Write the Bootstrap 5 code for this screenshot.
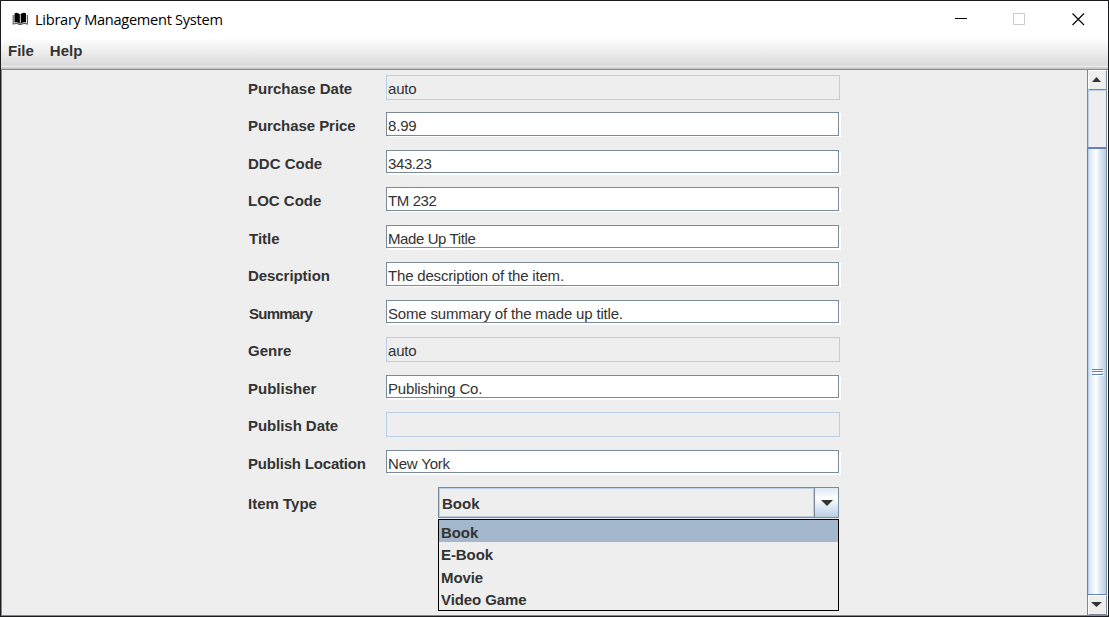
<!DOCTYPE html>
<html lang="en">
<head>
<meta charset="utf-8">
<title>Library Management System</title>
<link href="https://cdn.jsdelivr.net/npm/bootstrap@5.3.0/dist/css/bootstrap.min.css" rel="stylesheet">
<style>
body{height:617px;overflow:hidden;background:#eee;color:#333;font:15px/18px "Liberation Sans",Arial,sans-serif}
svg{display:block;flex:none}
.window{height:617px;border:1px solid #1b1b1f}
.titlebar{height:37px;padding:0 21px 1px 11px;background:#fff;color:#000}
.caption{font:14.6px/20px "Open Sans","Noto Sans",sans-serif;letter-spacing:-.28px;margin-left:6px}
.menus{height:31px;padding:4px 0 0 7px;gap:16px;background:linear-gradient(#fff,#dadada 28px,#eee 28px,#eee 29px,#ccc 29px);font-weight:700}
.pane{height:547px;border:solid #7a8a99;border-width:1px 0 1px 1px}
.pane-body{padding:5px 0 0 246px}
.form-line{height:37px}
.form-line:nth-child(even){height:38px}
.name{width:138px;font-weight:700;line-height:18px;padding-top:5px;white-space:nowrap}
.name.tight{letter-spacing:-.19px}
.name.snug{letter-spacing:-.06px}
.name.tighter{letter-spacing:-.75px;padding-left:1px}
.name.nudge{padding-left:1px}
.field{width:453px;height:24px;border:1px solid #7a8a99;background:#fff;padding:4px 0 0 1px;letter-spacing:-.18px;box-shadow:2px 1px #fff;white-space:pre}
.form-line:nth-child(odd) .field{height:23px;box-shadow:2px 2px #fff}
.form-line .field.short-run{letter-spacing:-.4px}
.form-line .field.locked{width:454px;height:25px;background:#eee;border-color:#b8cfe5;box-shadow:none}
.combo{width:401px;height:31px;margin-left:52px;border:1px solid #7a8a99;font-weight:700}
.combo-value{height:29px;border:1px solid #b8cfe5;padding:6px 0 0 2px}
.combo-btn{width:24px;height:30px;border-left:1px solid #7a8a99;border-bottom:1px solid #7a8a99;background:linear-gradient(#dde8f3,#fff 35%,#b8cfe5);padding-top:1px}
.choices{left:52px;top:32px;width:401px;height:92px;border:1px solid #000;background:#eee;font-weight:700}
.choice{height:22.5px;padding:4px 0 0 2px;letter-spacing:-.08px}
.choice:nth-child(even){padding-top:3px}
.choice.picked{background:linear-gradient(#a3b8cc 22px,#eee 22px)}
.scroll{width:21px;border-left:1px solid #7a8a99;border-right:1px solid #fff}
.step{height:20px;border:1px solid #fff;border-right-color:#7a8a99;border-bottom-color:#7a8a99;padding:0 2px 2px 0}
.track{height:57px;border:solid #b8cfe5;border-width:1px 1px 0;border-right-color:#7a8a99}
.thumb{height:448px;margin-left:-1px;border:1px solid #6382bf;border-top-width:2px;border-right-color:#7a8a99;background:linear-gradient(90deg,#b8cfe5 1px,#d5e3f0 1px,#fff 8px,#dde8f3 12px,#b8cfe5);padding:3px 0 0 1px}
</style>
</head>
<body>
<div class="window d-flex flex-column">
 <header class="titlebar d-flex align-items-center">
  <svg width="17" height="14" viewBox="0 0 17 14"><path d="M2.500 1.500Q5-.2 8 2.500Q11.500-.2 14 1.500V10.500Q11 9.500 8.300 12Q5.500 9.500 2.500 10.500Z" fill="#000"/><path d="M1.200 3V12Q5 10.800 7.500 12.500H9Q11.500 10.800 15.400 12V3" fill="none" stroke="#555" stroke-width="1.100"/><path d="M8.300 2.500V11.500" stroke="#ddd" stroke-width="1"/></svg>
  <div class="caption">Library Management System</div>
  <svg class="ms-auto" width="132" height="13" viewBox="0 0 132 13" shape-rendering="crispEdges"><path d="M0 5.500H12" stroke="#000"/><path d="M58.500 .5h11v11h-11z" fill="none" stroke="#ccc"/><path d="M117.500 .5l11.500 11.500m0-11.500l-11.500 11.500" stroke="#000" stroke-width="1.100" shape-rendering="auto"/></svg>
 </header>
 <nav class="menus d-flex"><span>File</span><span>Help</span></nav>
 <main class="pane d-flex">
  <div class="pane-body flex-grow-1">
   <div class="form-line d-flex"><label class="name">Purchase Date</label><div class="field locked">auto</div></div>
   <div class="form-line d-flex"><label class="name snug">Purchase Price</label><div class="field">8.99</div></div>
   <div class="form-line d-flex"><label class="name">DDC Code</label><div class="field short-run">343.23</div></div>
   <div class="form-line d-flex"><label class="name">LOC Code</label><div class="field short-run">TM 232</div></div>
   <div class="form-line d-flex"><label class="name nudge">Title</label><div class="field short-run">Made Up Title</div></div>
   <div class="form-line d-flex"><label class="name snug">Description</label><div class="field">The description of the item.</div></div>
   <div class="form-line d-flex"><label class="name tighter">Summary</label><div class="field">Some summary of the made up title.</div></div>
   <div class="form-line d-flex"><label class="name">Genre</label><div class="field locked">auto</div></div>
   <div class="form-line d-flex"><label class="name">Publisher</label><div class="field">Publishing Co.</div></div>
   <div class="form-line d-flex"><label class="name snug">Publish Date</label><div class="field locked"></div></div>
   <div class="form-line d-flex"><label class="name tight">Publish Location</label><div class="field">New York</div></div>
   <div class="d-flex">
    <label class="name pt-2">Item Type</label>
    <div class="position-relative">
     <div class="combo d-flex"><div class="combo-value flex-grow-1">Book</div><div class="combo-btn d-flex align-items-center justify-content-center"><svg width="12" height="6"><path d="M0 0H12L6 6Z" fill="#333"/></svg></div></div>
     <div class="choices position-absolute"><div class="choice picked">Book</div><div class="choice">E-Book</div><div class="choice">Movie</div><div class="choice">Video Game</div></div>
    </div>
   </div>
  </div>
  <div class="scroll d-flex flex-column">
   <div class="step d-flex align-items-center justify-content-center"><svg width="9" height="5"><path d="M0 5H9L4.500 0Z" fill="#333"/></svg></div>
   <div class="track"></div>
   <div class="thumb d-flex align-items-center justify-content-center"><svg width="12" height="8" shape-rendering="crispEdges"><path d="M1 1.500H12M1 3.500H12M1 6.500H12" stroke="#fff"/><path d="M0 .5H11M0 2.500H11M0 5.500H11" stroke="#6382bf"/></svg></div>
   <div class="step d-flex align-items-center justify-content-center"><svg width="11" height="5"><path d="M0 0H11L5.500 5Z" fill="#333"/></svg></div>
  </div>
 </main>
</div>
<script src="https://cdn.jsdelivr.net/npm/bootstrap@5.3.0/dist/js/bootstrap.bundle.min.js"></script>
</body>
</html>
